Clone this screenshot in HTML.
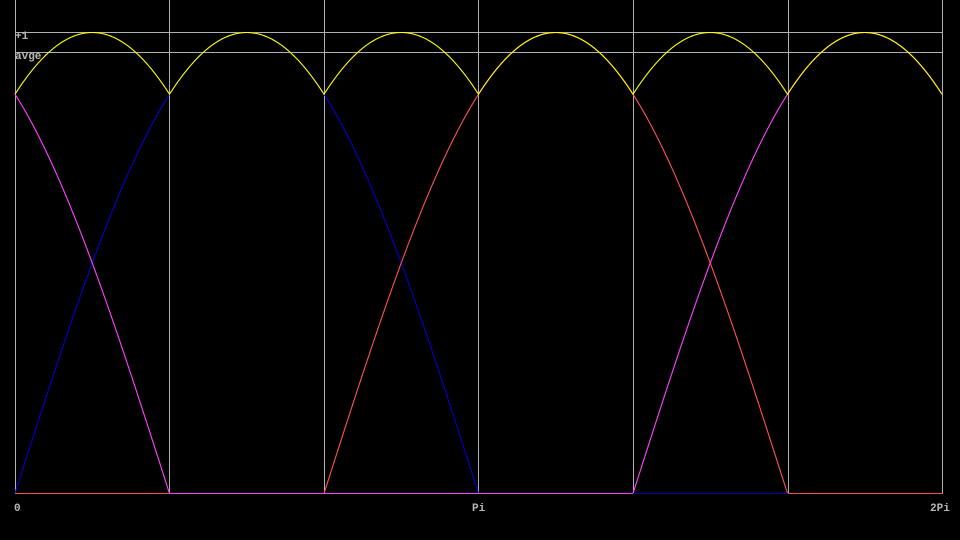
<!DOCTYPE html>
<html><head><style>
html,body{margin:0;padding:0;background:#000;width:960px;height:540px;overflow:hidden}
svg{display:block}
text{font-family:"Liberation Mono",monospace;font-size:11px;fill:#b8b8b8;font-weight:bold}
</style></head><body>
<svg id="s" width="960" height="540" viewBox="0 0 960 540" shape-rendering="crispEdges">
<g stroke="#b0b0b0" stroke-width="1">
<line x1="15.5" y1="0" x2="15.5" y2="493"/>
<line x1="169.5" y1="0" x2="169.5" y2="493"/>
<line x1="324.5" y1="0" x2="324.5" y2="493"/>
<line x1="478.5" y1="0" x2="478.5" y2="493"/>
<line x1="633.5" y1="0" x2="633.5" y2="493"/>
<line x1="788.5" y1="0" x2="788.5" y2="493"/>
<line x1="942.5" y1="0" x2="942.5" y2="493"/>
<line x1="15" y1="32.5" x2="943" y2="32.5"/>
<line x1="15" y1="52.5" x2="943" y2="52.5"/>
</g>
<text x="15" y="39">+1</text>
<text x="15" y="59">avge</text>
<text x="14" y="511">0</text>
<text x="472" y="511">Pi</text>
<text x="930" y="511">2Pi</text>
<g id="c" fill="none" stroke-width="1.1" shape-rendering="auto"></g>
<g stroke-width="1">
<line x1="15" y1="493.5" x2="169" y2="493.5" stroke="#ff5050"/>
<line x1="169" y1="493.5" x2="633" y2="493.5" stroke="#ff40ff"/>
<line x1="633" y1="493.5" x2="788" y2="493.5" stroke="#0000b0"/>
<line x1="788" y1="493.5" x2="943" y2="493.5" stroke="#ff5050"/>
</g>
</svg>
<script>
var g=document.getElementById('c');
function X(t){return 15+t/360*927}
function Y(v){return 493.5-461*v}
function curve(f,col){var d='';for(var t=0;t<=360;t+=0.25){var v=f(t*Math.PI/180);d+=(t?'L':'M')+X(t).toFixed(2)+' '+Y(v).toFixed(2)}
var p=document.createElementNS('http://www.w3.org/2000/svg','path');p.setAttribute('d',d);p.setAttribute('stroke',col);g.appendChild(p)}
var r=function(a){return Math.max(0,Math.sin(a-2*Math.PI/3))};
var b=function(a){return Math.max(0,Math.sin(a))};
var m=function(a){return Math.max(0,Math.sin(a+2*Math.PI/3))};
curve(b,'#0000d0');curve(r,'#ff5050');curve(m,'#ff40ff');
curve(function(a){return r(a)+b(a)+m(a)},'#ffff00');
</script>
</body></html>
